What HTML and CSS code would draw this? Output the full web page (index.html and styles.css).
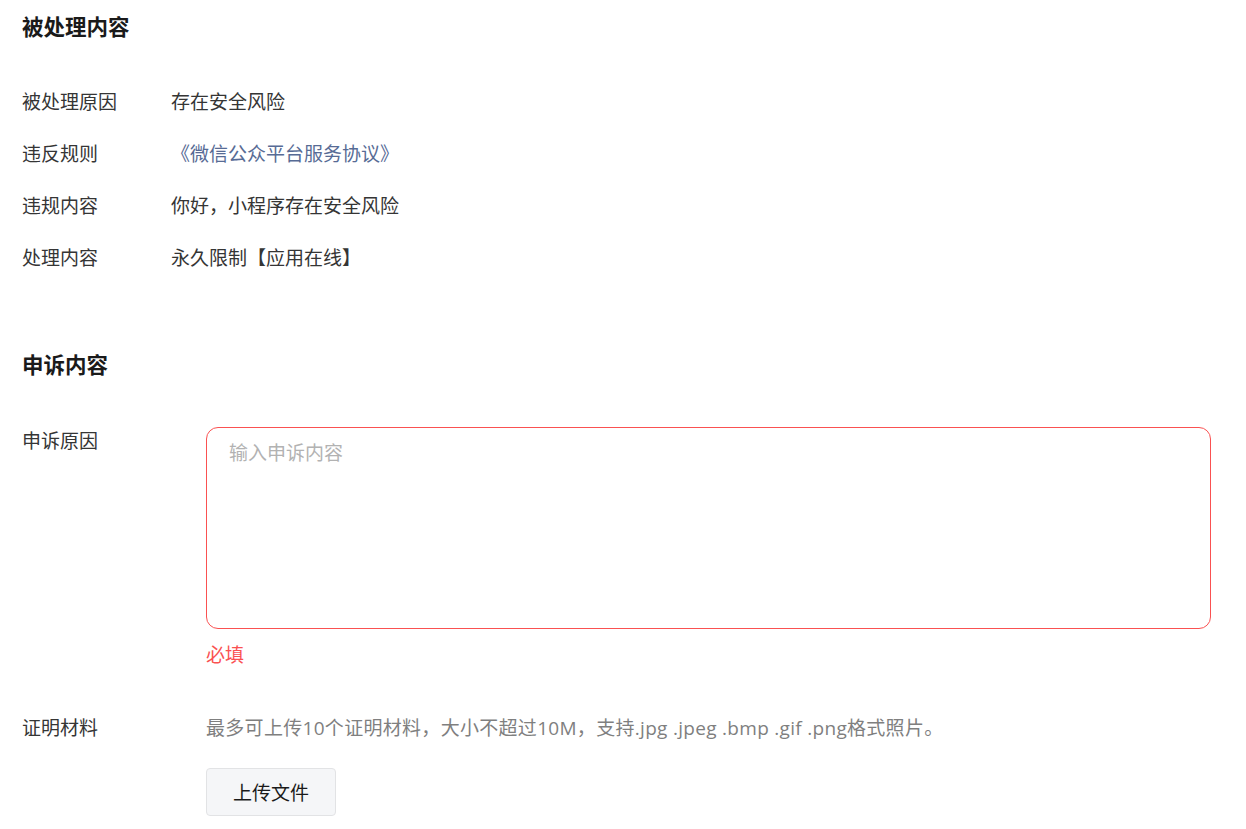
FILE: index.html
```html
<!DOCTYPE html>
<html lang="zh-CN">
<head>
<meta charset="utf-8">
<title>申诉</title>
<link rel="stylesheet" href="styles.css">
</head>
<body>
<div class="page">
  <section class="section">
    <h2 class="section-title">被处理内容</h2>
    <div class="info-list">
      <div class="info-row"><span class="info-label">被处理原因</span><span class="info-value">存在安全风险</span></div>
      <div class="info-row"><span class="info-label">违反规则</span><a class="info-value link" href="#">《微信公众平台服务协议》</a></div>
      <div class="info-row"><span class="info-label">违规内容</span><span class="info-value">你好，小程序存在安全风险</span></div>
      <div class="info-row"><span class="info-label">处理内容</span><span class="info-value">永久限制【应用在线】</span></div>
    </div>
  </section>
  <section class="section appeal">
    <h2 class="section-title">申诉内容</h2>
    <div class="form-row reason-row">
      <label class="form-label">申诉原因</label>
      <div class="form-field">
        <textarea class="textarea error" placeholder="输入申诉内容"></textarea>
        <div class="error-tip">必填</div>
      </div>
    </div>
    <div class="form-row proof-row">
      <label class="form-label">证明材料</label>
      <div class="form-field">
        <div class="hint">最多可上传10个证明材料，大小不超过10M，支持.jpg .jpeg .bmp .gif .png格式照片。</div>
        <button class="upload-btn" type="button">上传文件</button>
      </div>
    </div>
  </section>
</div>
</body>
</html>
```
FILE: styles.css
```css
* { box-sizing: border-box; }
html, body { margin: 0; padding: 0; background: #fff; }
body {
  font-family: "Open Sans", "Noto Sans CJK SC", "Noto Sans", sans-serif;
  color: #353535;
  font-size: 19px;
}
.page { padding: 12px 35px 0 22px; }
.section-title {
  margin: 0;
  font-size: 21.5px;
  line-height: 30px;
  font-weight: 700;
  color: #1a1a1a;
}
.info-list { margin-top: 33px; }
.info-row { display: flex; height: 52px; align-items: center; }
.info-label { width: 149px; flex: none; }
.info-value { color: #353535; }
.link { color: #576b95; text-decoration: none; }
.appeal { margin-top: 67px; }
.form-row { display: flex; }
.form-label { width: 184px; flex: none; line-height: 28px; }
.form-field { flex: 1; display: flex; flex-direction: column; align-items: flex-start; }
.reason-row { margin-top: 47px; }
.textarea {
  width: 100%;
  height: 202px;
  border: 1px solid #fa5151;
  border-radius: 12px;
  padding: 11px 22px;
  font: inherit;
  font-size: 19px;
  line-height: 28px;
  resize: none;
  outline: none;
  color: #353535;
}
.textarea::placeholder { color: #b2b2b2; }
.error-tip { color: #fa5151; margin-top: 13px; line-height: 26px; }
.proof-row { margin-top: 46px; }
.hint { color: #7f7f7f; font-size: 19px; line-height: 28px; letter-spacing: 0.3px; }
.upload-btn {
  margin-top: 26px;
  width: 130px;
  height: 48px;
  background: #f5f6f8;
  border: 1px solid #e2e3e5;
  border-radius: 4px;
  font: inherit;
  font-size: 19px;
  color: #1a1a1a;
  cursor: pointer;
}
```
